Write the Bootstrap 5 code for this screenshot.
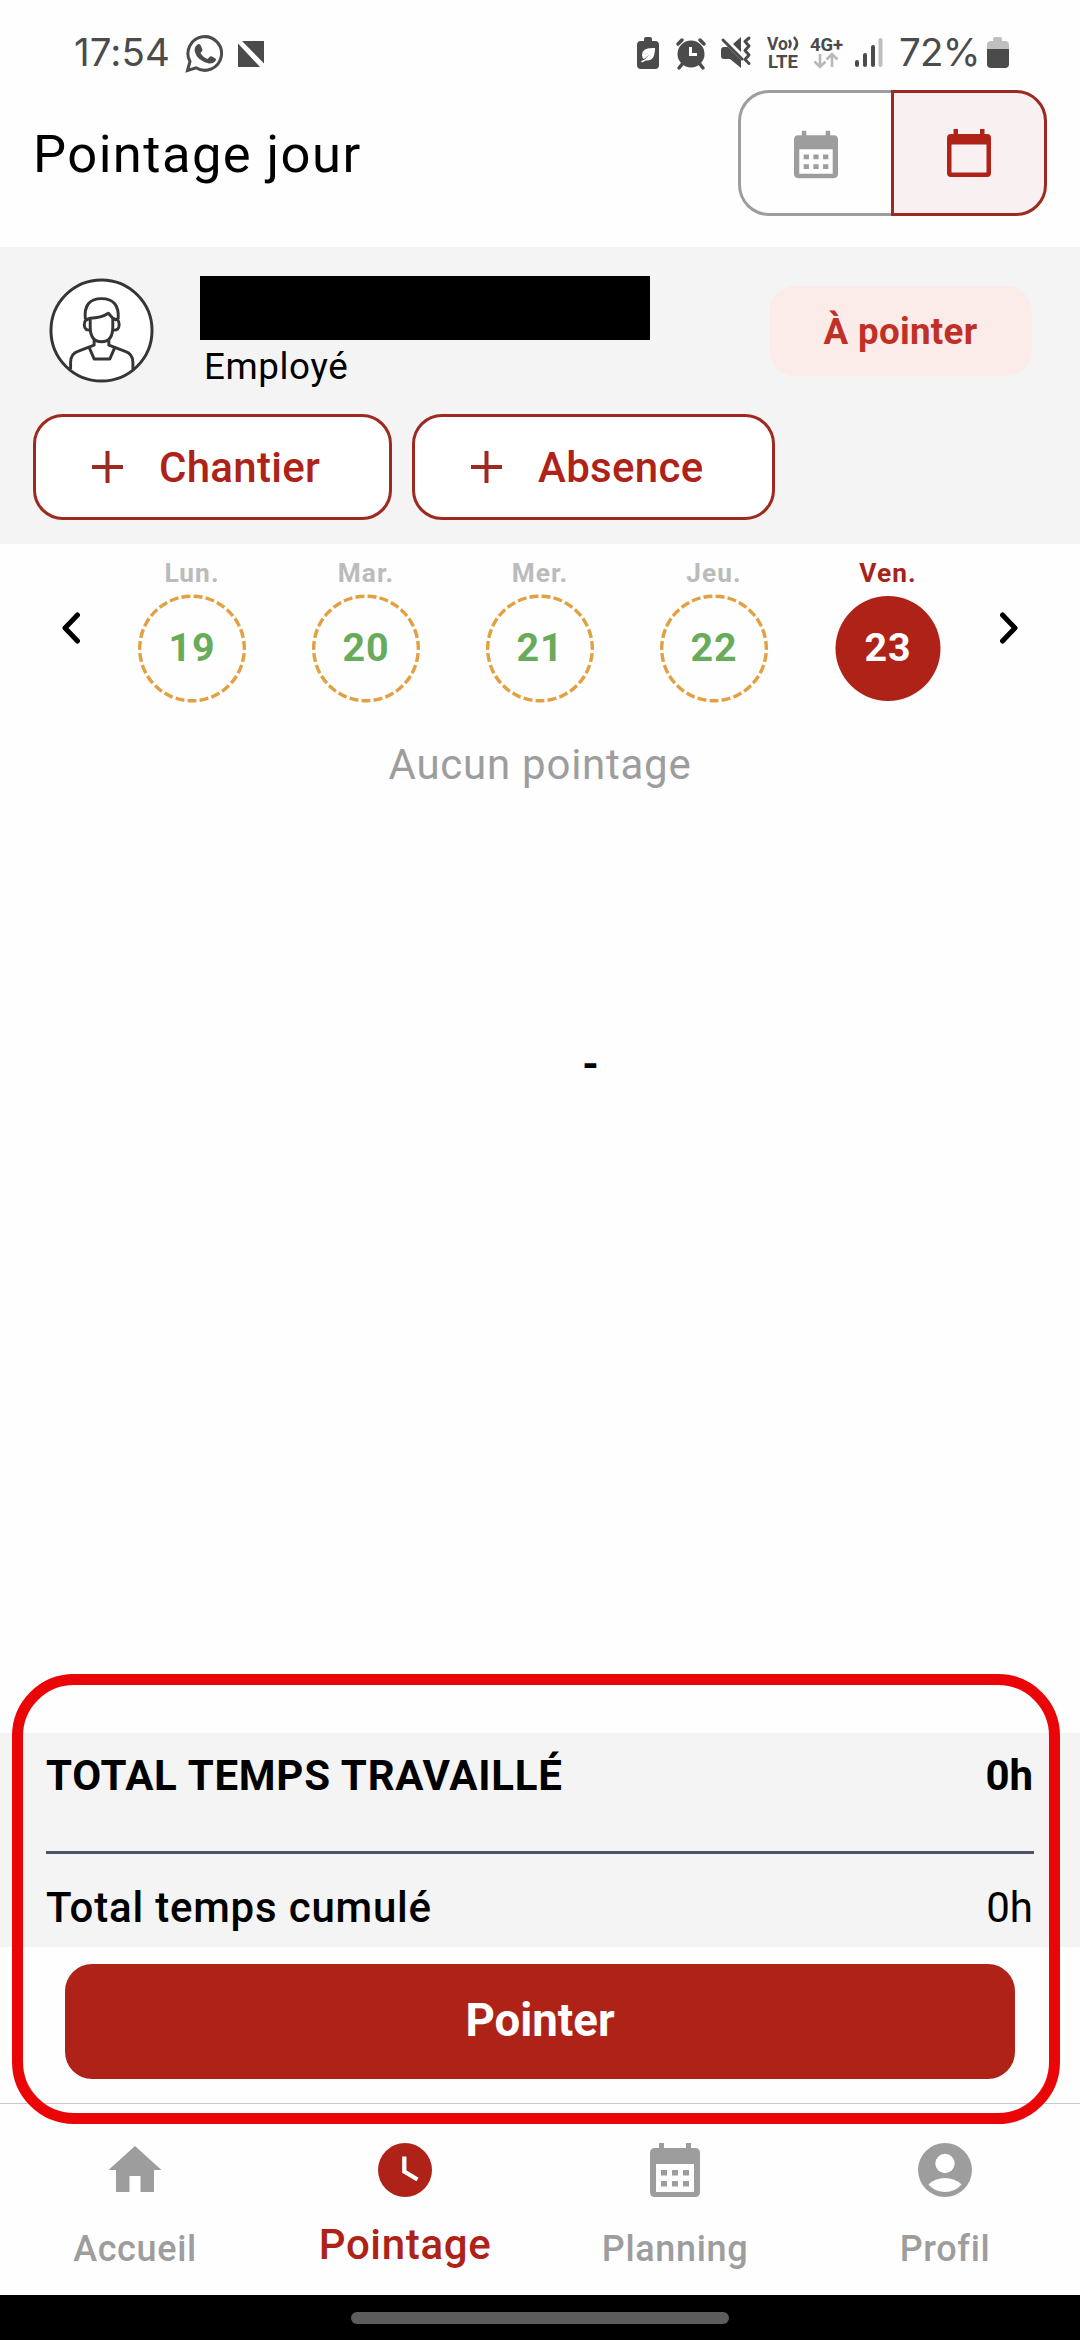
<!DOCTYPE html>
<html lang="fr">
<head>
<meta charset="utf-8">
<meta name="viewport" content="width=device-width, initial-scale=1">
<title>Pointage jour</title>
<link href="https://cdn.jsdelivr.net/npm/bootstrap@5.3.0/dist/css/bootstrap.min.css" rel="stylesheet">
<style>
:root{--brand:#ae2218;--muted:#9d9d9d;--band:#f4f4f4}
body{font-family:Roboto,sans-serif;color:#000;background:#fefefe;line-height:1.172}
svg{display:block;flex:none}
.screen{width:1080px;height:2340px;overflow:hidden}
.statusbar{height:90px;padding:18px 71px 0 74px;color:#4b4b4b;font-family:Inter,sans-serif;font-size:38.5px}
.statusbar .clock{width:111px;letter-spacing:.1px;margin-top:12px}
.statusbar .level{width:83px;letter-spacing:-.8px;margin-top:12px}
.topbar{height:157px;padding:0 33px 0 33px}
.topbar h1{font-size:52.5px;letter-spacing:1.45px;height:129px;line-height:129px}
.seg .btn{height:126px;border:3px solid var(--muted);border-radius:31px 0 0 31px;width:153px;border-right:0;padding:0}
.seg .btn.active{border:3px solid #9d2920;border-radius:0 31px 31px 0;width:156px;background:#f9f0f1}
.band{background:var(--band)}
.person{height:297px;padding:29px 33px 0}
.namebar{width:450px;height:64px;background:#000}
.role{font-size:36.75px;letter-spacing:.6px;padding:5px 0 0 4px}
.state{width:263px;height:90px;border-radius:26px;background:#fbebe9;color:#c13026;font-size:36.75px;letter-spacing:.3px;margin:10px 15px 0 0;padding-top:2px}
.btn-add{height:106px;border:3px solid #9d2920;border-radius:30px;background:#fff;color:var(--brand);font-size:42px;font-weight:500;letter-spacing:.3px;padding:0 0 0 56px}
.week{height:172px;padding:14px 62px 0}
.day{width:108px;margin-right:66px}
.day:last-child{margin-right:0}
.dname{font-size:26.25px;letter-spacing:1.05px;color:#bbb;line-height:31px}
.dnum{width:108px;height:109px;margin-top:5px;font-size:39.4px;letter-spacing:1px;color:#67ab5b}
.day.on .dname{color:#a5251d}
.day.on .dnum{color:#fff}
.dnum svg{left:0;top:0}
.empty{font-size:42px;letter-spacing:.75px;color:var(--muted);padding-top:24px}
.dash{font-size:42px;padding:251px 0 0 101px}
.totals{height:214px;padding:0 46px;font-size:42px}
.totals .trow{height:85px;padding:0 1px 0 0}
.rule{height:3px;background:#4d556c;margin:33px 0 29px}
.btn-go{height:115px;margin:17px 65px 24px;border-radius:27px;background:var(--brand);color:#fff;font-size:45.6px;font-weight:700}
.tabs{height:192px;border-top:1px solid #c8c8c8;padding-top:39px}
.tabs a{width:270px;color:var(--muted);font-size:36px;font-weight:500;letter-spacing:.65px}
.tabs a.active{color:var(--brand);font-size:42px}
.tabs .cap{height:60px;line-height:60px;margin-top:22px}
.tabs .active .cap{margin-top:18px}
.gesture{height:45px;background:#000;padding-top:17px}
.gesture div{width:378px;height:12px;border-radius:6px;background:#5c5c5c}
.frame{left:12px;top:1674px;width:1048px;height:450px;border:11px solid #ea0606;border-radius:62px}
</style>
</head>
<body>
<svg width="0" height="0" class="position-absolute">
  <symbol id="cal" viewBox="0 0 50 54"><path d="M5 5H9V0H14V5H36V0H41V5H45Q50 5 50 10V49Q50 54 45 54H5Q0 54 0 49V10Q0 5 5 5ZM6 21V49H44V21ZM11 27H17V32.500H11ZM22 27H28V32.500H22ZM33 27H39V32.500H33ZM11 38H17V43.500H11ZM22 38H28V43.500H22ZM33 38H39V43.500H33Z" fill="currentColor" fill-rule="evenodd"/></symbol>
  <symbol id="ring" viewBox="0 0 108 109"><circle cx="54" cy="54.500" r="52.300" fill="none" stroke="#e2a042" stroke-width="3.400" pathLength="27" stroke-dasharray=".74 .26" stroke-dashoffset="-.13" transform="rotate(-90 54 54.500)"/></symbol>
</svg>
<main class="screen position-relative d-flex flex-column">
  <header class="statusbar d-flex align-items-start">
    <div class="clock">17:54</div>
    <svg class="mt-3" width="38" height="39" viewBox="0 0 38 39"><path d="M2.500 36.500L5 27.500A16.800 16.800 0 1 1 11 33.800Z" fill="none" stroke="#4b4b4b" stroke-width="3"/><path d="M12 11q2-2 3.500 0l2 4.500q.3 1.200-2 3.500 2.500 4.500 7 6l2.500-2.500q1-.7 2 0l3.500 2q1 .8 0 2.500-2.500 3-6.500 2.500Q12 26.500 9.800 17.500 9 13.500 12 11Z" fill="#4b4b4b"/></svg>
    <svg width="26" height="26" viewBox="0 0 26 26" style="margin:23px 0 0 15px"><path d="M0 2.500L22 26H0ZM4 0H26V22.500Z" fill="#4b4b4b"/></svg>
    <svg class="ms-auto" width="262" height="40" viewBox="0 0 262 40" style="margin-top:15px">
      <g fill="#4b4b4b">
        <path d="M7 4V2Q7 0 9 0h4q2 0 2 2v2h3q4 0 4 4v20q0 4-4 4H4q-4 0-4-4V8q0-4 4-4Z" transform="translate(0 4)"/>
        <circle cx="54" cy="21" r="13.500"/>
      </g>
      <path d="M18 15q-13-1-13 7 0 3 2 4l6-5-6 6-3 1 1 1.500 4-2q9 1 9-12.500Z" fill="#fff"/>
      <path d="M46 30l-4 5M62 30l4 5M41 11l4-4M67 11l-4-4" stroke="#4b4b4b" stroke-width="3.500" stroke-linecap="round"/>
      <path d="M53.500 14v7.500H60" fill="none" stroke="#fff" stroke-width="3"/>
      <path d="M84 17q0-3 3-3h4l13 13v8L93 26h-6q-3 0-3-3ZM96 11l8-7v15Z" fill="#4b4b4b"/>
      <path d="M86 7l19 19M112 5l-4 3.500 4 4.500-4 4.500 4 4.500-4 4.500 4 4" fill="none" stroke="#4b4b4b" stroke-width="3" stroke-linejoin="round" stroke-linecap="round"/>
      <g fill="#4b4b4b" font-family="Roboto" font-weight="700"><text x="130" y="17" font-size="17.500" textLength="21">Vo</text><text x="131" y="34.500" font-size="18.500" textLength="30">LTE</text><text x="173" y="18" font-size="18.500" textLength="33">4G+</text></g>
      <path d="M152 7q3 4 0 8M157 4q6 6.500 0 13" fill="none" stroke="#4b4b4b" stroke-width="2.500"/>
      <path d="M183 21v13m-5.500-5.500l5.500 5.500 5.500-5.500M195 34V21m-5.500 5.500L195 21l5.500 5.500" fill="none" stroke="#b9b9b9" stroke-width="2.600"/>
      <path d="M220 29v3M228 22v10M236 14v18" stroke="#4b4b4b" stroke-width="4" stroke-linecap="round"/><path d="M243.500 7v25" stroke="#bfbfbf" stroke-width="4" stroke-linecap="round"/>
    </svg>
    <div class="level">72%</div>
    <svg width="22" height="31" viewBox="0 0 22 31" style="margin-top:19px;margin-left:5px"><path d="M0 13V8q0-4 4-4h2V2q0-2 2-2h5q2 0 2 2v2h3q4 0 4 4v5Z" fill="#bfbfbf"/><path d="M0 12H22V27q0 4-4 4H4q-4 0-4-4Z" fill="#4b4b4b"/></svg>
  </header>

  <div class="topbar d-flex justify-content-between align-items-start">
    <h1 class="fw-normal m-0">Pointage jour</h1>
    <div class="seg d-flex">
      <button class="btn d-flex align-items-center justify-content-center" aria-label="Mois"><svg width="44" height="49" style="color:var(--muted);margin-top:3px"><use href="#cal"/></svg></button>
      <button class="btn active d-flex align-items-center justify-content-center" aria-label="Jour"><svg width="44" height="48" viewBox="0 0 44 48"><path d="M4 5H6.500V0H11V5H33V0H37.500V5H40Q44 5 44 9V44Q44 48 40 48H4Q0 48 0 44V9Q0 5 4 5ZM4.500 15.500V43.500H39.500V15.500Z" fill="#ae2218" fill-rule="evenodd"/></svg></button>
    </div>
  </div>

  <section class="band person">
    <div class="d-flex align-items-start">
      <svg width="105" height="105" viewBox="0 0 107 107" style="margin:2px 46px 0 16px"><g fill="#fff" stroke="#353535" stroke-width="3" stroke-linejoin="round"><circle cx="53.500" cy="53.500" r="51.500"/><path d="M22 93V86Q22 77 30 74.500L46 68.500V63M61 63v5.500l16 6Q85.500 77 85.500 86V93M41 71l5 11.500H62L67 71" fill="none"/><path d="M42 41V50Q42 65 53.500 65T65 50V41L60.500 36Q53 41 42 41Z" fill="none"/><path d="M37 42Q35 21 53.500 21T70.500 42M42 42q-6-1-6 5.500t6.500 5.500M65.500 42q6-1 6 5.500t-6.500 5.500M41 41l-3 2M65.500 41l3 2" fill="none"/></g></svg>
      <div class="me-auto"><div class="namebar"></div><div class="role">Employé</div></div>
      <div class="state fw-bold d-flex align-items-center justify-content-center">À pointer</div>
    </div>
    <div class="d-flex" style="gap:20px;margin-top:26px">
      <button class="btn btn-add d-flex align-items-center" style="width:359px"><svg width="31" height="32" viewBox="0 0 31 32" style="margin-right:36px"><path d="M0 16H31M15.500 0V32" stroke="#9d2920" stroke-width="4"/></svg>Chantier</button>
      <button class="btn btn-add d-flex align-items-center" style="width:363px"><svg width="31" height="32" viewBox="0 0 31 32" style="margin-right:36px"><path d="M0 16H31M15.500 0V32" stroke="#9d2920" stroke-width="4"/></svg>Absence</button>
    </div>
  </section>

  <section class="week d-flex align-items-start justify-content-between text-center fw-bold">
    <svg width="18" height="32" viewBox="0 0 18 32" style="margin-top:54px"><path d="M15.500 3L3 16 15.500 29" fill="none" stroke="#000" stroke-width="5" stroke-linecap="round" stroke-linejoin="round"/></svg>
    <div class="d-flex">
      <div class="day"><div class="dname">Lun.</div><div class="dnum position-relative d-flex align-items-center justify-content-center"><svg class="position-absolute" width="108" height="109"><use href="#ring"/></svg>19</div></div>
      <div class="day"><div class="dname">Mar.</div><div class="dnum position-relative d-flex align-items-center justify-content-center"><svg class="position-absolute" width="108" height="109"><use href="#ring"/></svg>20</div></div>
      <div class="day"><div class="dname">Mer.</div><div class="dnum position-relative d-flex align-items-center justify-content-center"><svg class="position-absolute" width="108" height="109"><use href="#ring"/></svg>21</div></div>
      <div class="day"><div class="dname">Jeu.</div><div class="dnum position-relative d-flex align-items-center justify-content-center"><svg class="position-absolute" width="108" height="109"><use href="#ring"/></svg>22</div></div>
      <div class="day on"><div class="dname">Ven.</div><div class="dnum position-relative d-flex align-items-center justify-content-center"><svg class="position-absolute" width="108" height="109"><circle cx="54" cy="54.500" r="52.500" fill="#ae2218"/></svg><span class="position-relative">23</span></div></div>
    </div>
    <svg width="18" height="32" viewBox="0 0 18 32" style="margin-top:54px"><path d="M2.500 3L15 16 2.500 29" fill="none" stroke="#000" stroke-width="5" stroke-linecap="round" stroke-linejoin="round"/></svg>
  </section>

  <section class="flex-grow-1 text-center">
    <div class="empty">Aucun pointage</div>
    <div class="dash fw-bold">-</div>
  </section>

  <section class="band totals">
    <div class="trow d-flex justify-content-between align-items-center fw-bold"><span style="letter-spacing:.75px">TOTAL TEMPS TRAVAILLÉ</span><span>0h</span></div>
    <div class="rule"></div>
    <div class="d-flex justify-content-between" style="padding:0 1px 0 0"><span style="font-weight:500;letter-spacing:.8px">Total temps cumulé</span><span>0h</span></div>
  </section>
  <button class="btn btn-go">Pointer</button>

  <nav class="tabs d-flex text-center">
    <a class="text-decoration-none"><svg class="mx-auto" width="54" height="54" viewBox="0 0 54 54"><path d="M27 3L53.500 27H46V49H32.500V33H21.500V49H8V27H.500Z" fill="currentColor"/></svg><div class="cap">Accueil</div></a>
    <a class="active text-decoration-none"><svg class="mx-auto" width="54" height="54" viewBox="0 0 54 54"><circle cx="27" cy="27" r="27" fill="currentColor"/><path d="M26.300 13.500V28.500L39.500 36.500" fill="none" stroke="#fff" stroke-width="4.300"/></svg><div class="cap">Pointage</div></a>
    <a class="text-decoration-none"><svg class="mx-auto" width="50" height="54"><use href="#cal"/></svg><div class="cap">Planning</div></a>
    <a class="text-decoration-none"><svg class="mx-auto" width="54" height="54" viewBox="0 0 54 54"><circle cx="27" cy="27" r="27" fill="currentColor"/><circle cx="27" cy="20.500" r="9.700" fill="#fff"/><path d="M10.500 41.500Q17 35 27 35T43.500 41.500Q37 49 27 49T10.500 41.500Z" fill="#fff"/></svg><div class="cap">Profil</div></a>
  </nav>
  <footer class="gesture"><div class="mx-auto"></div></footer>
  <div class="frame position-absolute"></div>
</main>
<script src="https://cdn.jsdelivr.net/npm/bootstrap@5.3.0/dist/js/bootstrap.bundle.min.js"></script>
</body>
</html>
